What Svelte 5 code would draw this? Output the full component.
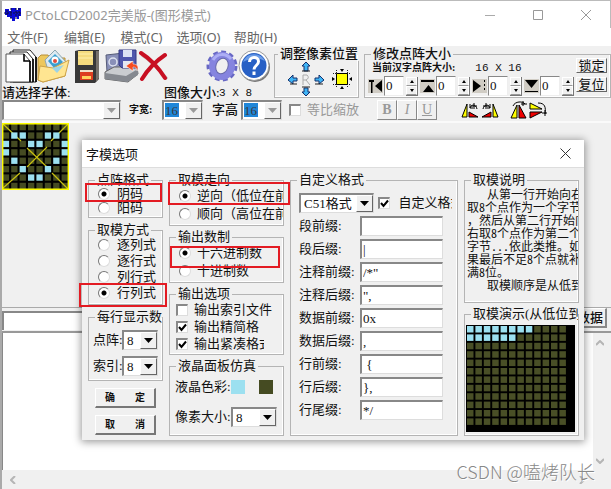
<script>
  const menus = ['文件(F)', '编辑(E)', '模式(C)', '选项(O)', '帮助(H)'];
  const lit = ['1,1', '2,1', '5,1', '6,1', '0,2', '3,2', '4,2', '7,2', '0,3', '7,3', '1,4', '6,4', '2,5', '5,5', '3,6', '4,6'];
  const range = (n) => Array.from({ length: n }, (_, i) => i);
  const sides = ['左', '上', '右', '下'];
  const affixes = [
    ['段前缀:', ''],
    ['段后缀:', '|'],
    ['注释前缀:', '/*"'],
    ['注释后缀:', '",'],
    ['数据前缀:', '0x'],
    ['数据后缀:', ','],
    ['行前缀:', ' {'],
    ['行后缀:', '},'],
    ['行尾缀:', '*/']
  ];
</script>

{#snippet combo(id, value, size, off)}
  <span class="combo {size}" class:off>
    <select {id} aria-label={id}><option>{value}</option></select>
    <span class="drop"><svg width="9" height="5" viewBox="0 0 9 5"><path d="M0 0h9L4.500 5z" fill={off ? '#999' : '#000'} /></svg></span>
  </span>
{/snippet}

<div class="app">
  <header class="title">
    <svg width="18" height="15" viewBox="0 0 18 15"><path d="M1 2h4v2h2V1h5v2h2V1h3v8h-2v3h-2v-2h-2v4H8v-3H6v-1H3V8H1z" fill="#0a0ad8" /><path d="M0 6h18M3 3v6M7 1v12M12 1v12M15 1v9" stroke="#101030" stroke-width="1" stroke-dasharray="2 1" /></svg>
    <h1>PCtoLCD2002完美版-(图形模式)</h1>
    <div class="winbtns">
      <button aria-label="最小化"><svg width="10" height="10"><path d="M0 5.500h10" stroke="#aaa" /></svg></button>
      <button aria-label="最大化"><svg width="10" height="10"><path d="M.5.500h9v9h-9z" stroke="#999" fill="none" /></svg></button>
      <button aria-label="关闭"><svg width="10" height="10"><path d="M0 0l10 10M10 0L0 10" stroke="#999" /></svg></button>
    </div>
  </header>
  <nav>{#each menus as m}<button>{m}</button>{/each}</nav>

  <div class="toolbar">
    <div class="upper">
      <div class="files">
        <div class="icons">
          <button aria-label="新建"><svg width="32" height="34" viewBox="0 0 32 34"><path d="M8 1h17l6 7v25H8z" fill="#fff" stroke="#222" /><path d="M5 3h17l6 7v23H5z" fill="#fff" stroke="#222" /><path d="M1 5h18l6 7v21H1z" fill="#fff" stroke="#555" /><path d="M19 5v7h6M25 12v21M28 10v23M31 8v25" stroke="#000" stroke-width="1.600" fill="none" /></svg></button>
          <button aria-label="打开"><svg width="33" height="34" viewBox="0 0 33 34"><path d="M1 9l3-3h7l2 3h15v18L6 33l-5-2z" fill="#edc75c" stroke="#b8903a" /><path d="M8 11L18 1l11 12-4 12H12z" fill="#dceaf2" stroke="#8da5b0" /><path d="M11 12l7-7 8 8-8 7z" fill="#3b9ed0" /><circle cx="18" cy="11" r="3.500" fill="#fff" /><circle cx="18" cy="12" r="2" fill="#e04a3a" /><path d="M3 17l13 2 16-8-4 16-22 6-5-2z" fill="#ffe591" stroke="#cda247" /><path d="M15 19l12-3-7 8z" fill="#9bd3e8" /></svg></button>
          <button aria-label="保存" class="save"><svg width="26" height="34" viewBox="0 0 26 34"><path d="M1 2l4-1h20v29l-4 4H1z" fill="#383838" /><path d="M22 2h3v27l-3 4z" fill="#77716a" /><path d="M4 2h15v14H4z" fill="#f5db7e" /><path d="M4 5h15M4 9h15" stroke="#fff0ad" /><path d="M6 22h13v9H6z" fill="#dd3e20" /><path d="M8 27h9v3H8z" fill="#ffd35d" /><path d="M6 21h13v2H6z" fill="#f2e1c8" /></svg></button>
          <button aria-label="另存"><svg width="35" height="34" viewBox="0 0 35 34"><path d="M2 6l18-2 4 16-21 3z" fill="#8990b8" stroke="#555b78" /><circle cx="9" cy="13" r="4" fill="none" stroke="#dde2f0" stroke-width="1.500" /><path d="M1 23l9-5h23l1 7-10 8L1 30z" fill="#c9ccd0" stroke="#666" /><path d="M1 24l21 3 12-7v6l-11 7L1 30z" fill="#858990" /><path d="M15 1h17v18H18l-3-3z" fill="#5058ad" stroke="#353982" /><path d="M19 1h9v7h-9z" fill="#dde4f4" /><path d="M19 12h10v7H19z" fill="#e4e7f2" /><path d="M22 17l7-5v3c5 0 6 3 4 7 0-3-2-4-4-4v4z" fill="#f54c20" stroke="#fff" stroke-width=".5" /></svg></button>
          <button aria-label="删除"><svg width="31" height="34" viewBox="0 0 31 34"><path d="M3 6c8 5 16 13 25 24" stroke="#888" stroke-width="3" opacity=".5" fill="none" /><path d="M2 4c8 5 17 14 24 25M26 6C17 12 9 20 3 30" stroke="#c80f22" stroke-width="4" fill="none" stroke-linecap="round" /></svg></button>
          <span class="grow"></span>
          <button aria-label="设置"><svg width="32" height="34" viewBox="0 0 32 34"><circle cx="16" cy="17" r="13.500" fill="none" stroke="#6767c4" stroke-width="4" stroke-dasharray="4.600 3.200" /><ellipse cx="16" cy="17" rx="9.500" ry="10.500" fill="none" stroke="#8584df" stroke-width="7" /><path d="M7 11c4-7 13-7 18-1" stroke="#adaef5" stroke-width="3" fill="none" /><ellipse cx="16" cy="17" rx="6" ry="8" fill="#f0f0f0" stroke="#6667a9" transform="rotate(20 16 17)" /></svg></button>
          <button aria-label="关于"><svg width="32" height="34" viewBox="0 0 32 34"><circle cx="17" cy="18" r="15" fill="#777" /><circle cx="16" cy="16.500" r="15" fill="#fff" stroke="#999" /><circle cx="16" cy="16.500" r="12.500" fill="#2860c5" /><path d="M5 13a12 12 0 0122-1c-7-4-15-3-22 1" fill="#6a9ce8" /><path d="M11.500 13c0-6 9-6 9-.5 0 4-4.500 4-4.500 8M16 22.500V26" stroke="#fff" stroke-width="3" fill="none" /></svg></button>
        </div>
        <div class="captions"><label for="字体">请选择字体:</label><span>图像大小:</span><span class="mono">3 X 8</span></div>
      </div>

      <fieldset class="move">
        <legend>调整像素位置</legend>
        <div class="pads">
          <svg width="38" height="36" viewBox="0 0 38 36"><g fill="#3fb4f5" stroke="#14306c" stroke-width="1"><path d="M17 10V5h-2l4-4 4 4h-2v5z" /><path d="M17 27v4h-2l4 4 4-4h-2v-4z" /><path d="M10 17H6v-3l-5 5 5 4v-3h4z" /><path d="M28 17h4v-3l5 5-5 4v-3h-4z" /></g><path d="M15 10h8M15 26h8M10 23H3M28 23h8" stroke="#222" /><path d="M16 24V14h4q3 3-1 5h-3m3 0l4 5" stroke="#aaa" fill="none" /></svg>
          <svg width="20" height="20" viewBox="0 0 20 20"><path d="M4.500 1v18M15.500 1v18M1 4.500h18M1 15.500h18" stroke="#222" stroke-dasharray="1 1" /><path d="M4.500 4.500h11v11h-11z" fill="#ff0" stroke="#000" /><path d="M8 0h4l-2 3zM8 20h4l-2-3zM0 8v4l3-2zM20 8v4l-3-2z" /></svg>
        </div>
      </fieldset>

      <fieldset class="matrix">
        <legend>修改点阵大小</legend>
        <div class="cols">
          <div class="adjust">
            <div class="now"><small>当前汉字点阵大小:</small><span class="mono">16 X 16</span></div>
            <div class="spins">
              {#each sides as s, i}
                <span class="spin">
                  <svg width="15" height="14" viewBox="0 0 15 14"><path d="M0 0h15v14H0z" fill="#d0ccc4" />
                    {#if i === 0}<path d="M1 1h5v2H4.500v11H3V3H1zM14 1v12L7 7z" />
                    {:else if i === 1}<path d="M1 1h13v2H1zM3 13L8.500 6 14 13z" />
                    {:else if i === 2}<path d="M1 1v12l8-6zM12 1h1v2h-1zM12 5h1v2h-1zM12 9h1v2h-1z" />
                    {:else}<path d="M1 1h13L7.500 9zM1 12h13v1H1z" />{/if}
                  </svg>
                  <input aria-label={s} value="0" />
                  <span class="updown"><button aria-label="{s}加"><svg width="4" height="3"><path d="M0 3h4L2 0z" /></svg></button><button aria-label="{s}减"><svg width="4" height="3"><path d="M0 0h4L2 3z" /></svg></button></span>
                </span>
              {/each}
            </div>
          </div>
          <div class="locks"><button>锁定</button><button>复位</button></div>
        </div>
      </fieldset>
    </div>

    <div class="lower">
      {@render combo('字体', '', 'font', true)}
      <small>字宽:</small>
      {@render combo('字宽', '16', 'mini', true)}
      <span class="high">字高</span>
      {@render combo('字高', '16', 'mini', true)}
      <label class="ratio"><input type="checkbox" />等比缩放</label>
      <div class="styles"><button><b>B</b></button><button><i>I</i></button><button><u>U</u></button></div>
      <div class="flips">
        <button aria-label="左转"><svg width="19" height="18" viewBox="0 0 19 18"><path d="M1 16L6 3v13z" fill="#ff0" stroke="#000" /><path d="M8 16v-5l9 5z" fill="#e00" stroke="#000" /><path d="M9 7c1-4 6-4 7 1M9 3v4h3M13 2v6M10 5h6" stroke="#000" fill="none" /></svg></button>
        <button aria-label="右转"><svg width="19" height="18" viewBox="0 0 19 18"><path d="M18 16L13 3v13z" fill="#ff0" stroke="#000" /><path d="M11 16v-5l-9 5z" fill="#e00" stroke="#000" /><path d="M3 8c1-5 6-5 7-1M10 3v4H7M6 2v6M3 5h6" stroke="#000" fill="none" /></svg></button>
        <button class="apart" aria-label="水平翻转"><svg width="20" height="18" viewBox="0 0 20 18"><path d="M2 17L8 4v13z" fill="#ff0" stroke="#000" /><path d="M10 4v13h7z" fill="#e00" stroke="#000" /><path d="M4 5c2-5 10-5 12-2M14 0v5M12 3h6" stroke="#000" fill="none" /></svg></button>
        <button aria-label="垂直翻转"><svg width="19" height="18" viewBox="0 0 19 18"><path d="M1 2v6h12z" fill="#ff0" stroke="#000" /><path d="M1 17v-6h12z" fill="#e00" stroke="#000" /><path d="M9 2c7 0 8 4 7 11M13 12h5M16 9v6" stroke="#000" fill="none" /></svg></button>
      </div>
    </div>
  </div>

  <main>
    <svg width="67" height="67" viewBox="0 0 67 67">
      <path d="M0 0h67v67H0z" fill="#000" />
      {#each range(8) as y}{#each range(8) as x}
        {#if !lit.includes(`${x},${y}`)}<rect x={0.8 + x * 8.4} y={1 + y * 8.4} width="6.300" height="6.300" fill="#454b22" />{/if}
      {/each}{/each}
      <path d="M1 1l18 17M66 1L49 18M25 25l20 19M45 24L25 44M18 50L1 65M50 50l16 16" stroke="#c8c010" stroke-width="1.200" />
      {#each lit as c}<rect x={0.8 + +c[0] * 8.4} y={1 + +c[2] * 8.4} width="6.300" height="6.300" fill="#9ce0f0" />{/each}
      <path d="M.7.700h65.600v65.600H.7z" fill="none" stroke="#ff0" stroke-width="1.400" />
    </svg>
  </main>

  <div class="output"><input aria-label="文字输入" /><button>数据</button></div>
  <div class="editor">
    <textarea aria-label="字模数据"></textarea>
    <div class="vbar"><svg width="8" height="6"><path d="M0 5l4-4 4 4" /></svg><svg width="8" height="6"><path d="M0 1l4 4 4-4" /></svg></div>
    <div class="hbar"><svg width="6" height="8"><path d="M5 0L1 4l4 4" /></svg><svg width="6" height="8"><path d="M1 0l4 4-4 4" /></svg></div>
  </div>

  <section class="dialog">
    <header><h2>字模选项</h2><button aria-label="关闭选项"><svg width="11" height="11"><path d="M.5.500l10 10M10.500.500l-10 10" stroke="#333" /></svg></button></header>
    <div class="body">
      <div class="col one">
        <fieldset><legend>点阵格式</legend><div class="list r14">
          <label><input type="radio" name="fmt" checked />阴码</label><label><input type="radio" name="fmt" />阳码</label>
        </div></fieldset>
        <fieldset><legend>取模方式</legend><div class="list r16">
          <label><input type="radio" name="way" />逐列式</label><label><input type="radio" name="way" />逐行式</label><label><input type="radio" name="way" />列行式</label><label><input type="radio" name="way" checked />行列式</label>
        </div></fieldset>
        <fieldset><legend>每行显示数据</legend><div class="counts">
          <div><label for="点阵">点阵:</label>{@render combo('点阵', '8', 'num', false)}</div>
          <div><label for="索引">索引:</label>{@render combo('索引', '8', 'num', false)}</div>
        </div></fieldset>
        <div class="actions"><button>确&emsp;&emsp;定</button><button>取&emsp;&emsp;消</button></div>
      </div>

      <div class="col two">
        <fieldset><legend>取模走向</legend><div class="list r18">
          <label><input type="radio" name="dir" checked />逆向（低位在前）</label><label><input type="radio" name="dir" />顺向（高位在前）</label>
        </div></fieldset>
        <fieldset><legend>输出数制</legend><div class="list r18">
          <label><input type="radio" name="base" checked />十六进制数</label><label><input type="radio" name="base" />十进制数</label>
        </div></fieldset>
        <fieldset><legend>输出选项</legend><div class="list checks">
          <label><input type="checkbox" />输出索引文件</label><label><input type="checkbox" checked />输出精简格</label><label class="cut"><input type="checkbox" checked />输出紧凑格式</label>
        </div></fieldset>
        <fieldset class="last"><legend>液晶面板仿真</legend><div class="panel">
          <div class="tints"><span>液晶色彩:</span><button class="cyan" aria-label="前景色"></button><button class="olive" aria-label="背景色"></button></div>
          <div><label for="像素">像素大小:</label>{@render combo('像素', '8', 'pix', false)}</div>
        </div></fieldset>
      </div>

      <div class="col three">
        <fieldset class="last"><legend>自定义格式</legend><div class="custom">
          <div class="kind">{@render combo('格式', 'C51格式', 'lang', false)}<label><input type="checkbox" checked /><span>自定义格式</span></label></div>
          {#each affixes as [name, value], i}
            <div class="affix"><label for="affix{i}">{name}</label><input id="affix{i}" {value} /></div>
          {/each}
        </div></fieldset>
      </div>

      <div class="col four">
        <fieldset class="explain"><legend>取模说明</legend><div class="lines">
          <p class="indent">从第一行开始向右</p><p>取8个点作为一个字节</p><p>，然后从第二行开始向</p><p>右取8个点作为第二个</p><p>字节...依此类推。如</p><p>果最后不足8个点就补</p><p>满8位。</p><p class="indent">取模顺序是从低到高</p>
        </div></fieldset>
        <fieldset class="last"><legend>取模演示(从低位到高位)</legend>
          <div class="demo"><svg viewBox="0 0 109 107">
            <path d="M0 0h109v107H0z" />
            {#each range(12) as y}{#each range(12) as x}
              <rect x={1 + x * 8.4} y={1 + y * 8.4} width="6.500" height="6.500" fill={(y === 0 && x < 8) || (y === 1 && x < 6) ? '#9ce0f0' : '#494f26'} />
            {/each}{/each}
          </svg></div>
        </fieldset>
      </div>
    </div>
    <i class="mark m1"></i><i class="mark m2"></i><i class="mark m3"></i><i class="mark m4"></i>
  </section>

  <div class="sign">CSDN @嗑烤队长</div>
</div>

<style>
  :global(body) { background: #f0f0f0; }
  * { box-sizing: border-box; }
  .app {
    position: relative; display: flex; flex-direction: column; min-height: 100vh; overflow: hidden;
    border-top: 1px solid #bbb; border-left: 2px solid #aaa; background: #f0f0f0; color: #111;
    font: 13px/14px 'Liberation Serif', 'Noto Sans CJK SC', sans-serif; white-space: nowrap;
  }
  button, input, select, textarea { font: inherit; color: inherit; margin: 0; padding: 0; border: 0; background: none; border-radius: 0; }
  button { display: flex; align-items: center; justify-content: center; }
  svg { display: block; flex: none; }
  h1, h2, p { margin: 0; font: inherit; }
  small { font-size: 10px; font-weight: bold; }
  fieldset { min-width: 0; margin: 0; padding: 0; border: 1px solid #b4b4b4; box-shadow: inset -1px -1px #fff; }
  legend { margin-left: 6px; padding: 0 2px; max-width: calc(100% - 6px); overflow: hidden; height: 14px; }
  .mono { font-family: 'Liberation Mono', monospace; font-size: 11px; }

  .title, nav { background: #fff; font-family: 'Noto Sans', 'Noto Sans CJK SC', sans-serif; }
  .title { display: flex; align-items: center; height: 27px; padding-left: 2px; color: #999; border-right: 1px solid #bbb; }
  h1 { margin-left: 3px; line-height: 18px; }
  .winbtns { display: flex; margin-left: auto; }
  .winbtns button { width: 48px; height: 26px; }
  nav { display: flex; gap: 16px; height: 18px; padding-left: 5px; color: #666; }
  nav button { line-height: 18px; width: 41px; }

  .toolbar { height: 77px; border-bottom: 2px solid #fafafa; }
  .upper { display: flex; height: 54px; padding-top: 1px; }
  .files { flex: 0 0 268px; padding-top: 2px; }
  .icons { display: flex; padding-left: 3px; }
  .save { margin: 0 4px; }
  .grow { flex: 1; }
  .captions { display: grid; grid-template-columns: 162px 55px 1fr; margin-top: 3px; font-weight: 500; }
  .move { width: 85px; height: 51px; margin-left: 4px; overflow: hidden; }
  .move legend { font-weight: 500; margin-left: 3px; max-width: none; }
  .pads { display: flex; align-items: center; gap: 7px; padding-left: 12px; height: 35px; }
  .matrix { flex: 1; height: 51px; margin-left: 5px; }
  .matrix legend { font-weight: 500; }
  .cols { display: flex; justify-content: space-between; padding: 0 3px; }
  .now { display: flex; gap: 20px; height: 14px; padding-left: 4px; }
  .spins { display: flex; margin-top: 1px; }
  .spin { display: flex; align-items: center; width: 52px; height: 20px; }
  .spin input { width: 20px; height: 20px; margin-left: 1px; padding-left: 1px; background: #fff; border: 1px solid #888; border-right-color: #eee; border-bottom-color: #eee; }
  .updown { display: flex; flex-direction: column; margin-left: 2px; border-right: 1px solid #777; border-bottom: 1px solid #777; }
  .updown button { width: 11px; height: 9px; border: 1px solid #fff; border-bottom-color: #999; }
  .locks { display: flex; flex-direction: column; gap: 4px; margin-top: -3px; }
  .locks button { width: 31px; height: 15px; border: 1px solid #fff; border-right-color: #666; border-bottom-color: #666; }
  .lower { display: flex; align-items: center; height: 20px; }
  .lower > small { width: 41px; padding-left: 8px; }
  .high { width: 38px; padding-left: 9px; font-weight: 500; }
  .ratio { display: flex; align-items: center; gap: 6px; margin-left: 7px; color: #999; }
  .styles { display: flex; margin-left: 18px; color: #999; }
  .styles button { width: 20px; height: 20px; border: 1px solid #fff; border-right-color: #888; border-bottom-color: #888; font-size: 14px; }
  .flips { display: flex; margin-left: 24px; }
  .flips .apart { margin-left: 10px; }

  .combo { display: inline-grid; height: 20px; border: 2px solid #888; border-right: 1px solid #ddd; border-bottom: 1px solid #ddd; background: #fff; }
  .combo select, .drop { grid-area: 1 / 1; }
  .combo select { appearance: none; width: 100%; padding: 0 0 0 3px; outline: 0; }
  .drop { display: flex; align-items: center; justify-content: center; justify-self: end; width: 17px; background: #f0f0f0; border: 1px solid #fff; border-right-color: #666; border-bottom-color: #666; pointer-events: none; }
  .font { width: 119px; }
  .mini { width: 41px; }
  .mini select { background: linear-gradient(#1f86d8, #1f86d8) 1px 1px / 14px 14px no-repeat; color: #3a3a40; padding-left: 1px; }
  .num { width: 36px; }
  .pix { width: 46px; }
  .lang { width: 75px; }

  input[type='radio'], input[type='checkbox'] { appearance: none; flex: none; width: 12px; height: 12px; background: #fff; }
  input[type='radio'] { border-radius: 50%; border: 1px solid #777; border-right-color: #ddd; border-bottom-color: #ddd; }
  input[type='radio']:checked { background: radial-gradient(circle, #000 0 2px, #fff 3px); }
  input[type='checkbox'] { border: 2px solid #888; border-right: 1px solid #ddd; border-bottom: 1px solid #ddd; }
  .dialog input[type='checkbox']:checked { background: url("data:image/svg+xml,%3Csvg xmlns='http://www.w3.org/2000/svg' viewBox='0 0 9 9'%3E%3Cpath d='M1 4l2.500 3L8 1.500' fill='none' stroke='black' stroke-width='2'/%3E%3C/svg%3E") #fff; }

  main { height: 185px; border-bottom: 1px solid #aaa; }
  .output { display: flex; height: 25px; padding-right: 4px; gap: 4px; border-bottom: 2px solid #999; }
  .output input { flex: 1; margin: 3px 0 1px; background: #fff; border: 2px solid #888; border-bottom: 0; }
  .output button { width: 64px; height: 20px; justify-content: flex-end; padding-right: 2px; font-weight: 500; border: 1px solid #fff; border-right: 2px solid #888; border-bottom: 2px solid #888; }
  .editor { flex: 1; display: grid; grid-template: 1fr 19px / 1fr 18px; }
  .editor textarea { resize: none; width: 100%; height: 100%; background: #fff; border-left: 1px solid #888; }
  .vbar, .hbar { display: flex; justify-content: space-between; align-items: center; }
  .vbar { flex-direction: column; padding: 7px 4px 6px 0; }
  .hbar { padding: 0 8px; }
  .vbar path, .hbar path { fill: none; stroke: #b5b5b5; stroke-width: 2; }

  .dialog { position: absolute; left: 80px; top: 139px; width: 502px; background: #f0f0f0; box-shadow: 0 1px 8px 1px rgb(0 0 0 / 40%); }
  .dialog header { display: flex; justify-content: space-between; align-items: center; height: 28px; padding: 0 13px 0 4px; background: #fff; border-bottom: 1px solid #ddd; font-family: 'Noto Sans', 'Noto Sans CJK SC', sans-serif; }
  .body { display: grid; grid-template-columns: 75fr 115fr 168fr 115fr; gap: 6px; padding: 5px 5px 4px 6px; height: 272px; }
  .col { display: flex; flex-direction: column; min-width: 0; gap: 4px; }
  .one { gap: 5px; }
  .last { flex: 1; }
  .list { display: flex; flex-direction: column; padding: 0 1px 2px 9px; overflow: hidden; }
  .list label { display: flex; align-items: center; gap: 7px; }
  .two .list label { gap: 6px; }
  .r14 label { height: 14px; }
  .r16 { padding-bottom: 3px; }
  .r16 label { height: 16px; }
  .r18 label { height: 18px; }
  .list.checks { padding-left: 6px; }
  .checks label { height: 17px; }
  .cut { width: 88px; overflow: hidden; }
  .counts { display: flex; flex-direction: column; gap: 6px; padding: 6px 0 4px 4px; }
  .counts div, .panel div { display: flex; align-items: center; }
  .counts label { width: 29px; }
  .actions { display: flex; flex-direction: column; gap: 7px; padding: 2px 7px 0; }
  .actions button { height: 20px; font-size: 10px; font-weight: bold; border: 1px solid #fff; border-right: 2px solid #777; border-bottom: 2px solid #777; }
  .panel { display: flex; flex-direction: column; gap: 12px; padding: 6px 0 0 5px; }
  .tints { height: 16px; }
  .panel span:first-child, .panel label { flex: 0 0 56px; }
  .panel .combo { flex: none; }
  .tints button { width: 14px; height: 14px; }
  .tints .cyan { background: #9ce0f0; }
  .tints .olive { background: #454b22; margin-left: 14px; }
  .custom { display: flex; flex-direction: column; gap: 3px; padding: 6px 5px 0 8px; }
  .kind, .kind label, .affix { display: flex; align-items: center; }
  .kind { gap: 4px; }
  .kind label { gap: 9px; min-width: 0; }
  .kind label span { overflow: hidden; width: 54px; }
  .affix label { width: 61px; }
  .affix input { width: 83px; height: 20px; padding-left: 1px; background: #fff; border: 2px solid #888; border-right: 1px solid #ddd; border-bottom: 1px solid #ddd; }
  .explain { height: 130px; }
  .lines { padding: 0 0 0 2px; font-size: 12px; line-height: 13px; overflow: hidden; font-family: 'Noto Sans Mono CJK SC', 'Noto Sans CJK SC', monospace; }
  .indent { text-indent: 20px; }
  .demo { padding: 4px 3px 0 1px; }
  .demo svg { width: 100%; }

  .mark { position: absolute; border: 2px solid #e31b23; }
  .m1 { left: 3px; top: 43px; width: 77px; height: 19px; }
  .m2 { left: 86px; top: 42px; width: 122px; height: 23px; }
  .m3 { left: 88px; top: 106px; width: 110px; height: 22px; }
  .m4 { left: -3px; top: 143px; width: 88px; height: 24px; }
  .sign { position: absolute; right: 16px; bottom: 6px; font: 18px/24px 'Noto Sans CJK SC', sans-serif; font-weight: 300; color: #888; text-shadow: 1px 1px #fff; }
</style>
